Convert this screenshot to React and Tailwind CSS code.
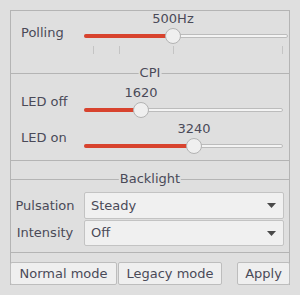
import React from 'react';

const Slider = ({ width, pos, value, valueH, rowH, ticks }) => {
    return (
        <div className="flex flex-col" style={{ width }}>
            <div className="relative" style={{ height: valueH }}>
                <span
                    className="absolute top-0 -translate-x-1/2 whitespace-nowrap"
                    style={{ left: pos, lineHeight: `${valueH}px` }}
                >
                    {value}
                </span>
            </div>
            <div className="relative flex items-center" style={{ height: rowH }}>
                <div className="w-full h-[4px] rounded-full border border-[#bcbcbc] bg-[#f4f4f4]" />
                <div
                    className="absolute left-0 h-[4px] rounded-l-full bg-[#d8432e]"
                    style={{ width: pos }}
                />
                <div
                    className="absolute w-[16px] h-[16px] -translate-x-1/2 rounded-full border border-[#b3b3b3] bg-[#efefef]"
                    style={{ left: pos }}
                />
            </div>
            {ticks && (
                <div className="relative h-[8px]">
                    {ticks.map((t) => (
                        <div key={t} className="absolute top-0 w-px h-[8px] bg-[#c4c4c4]" style={{ left: t }} />
                    ))}
                </div>
            )}
        </div>
    );
};

const Separator = ({ label }) => (
    <div className="relative h-px bg-[#b4b4b4]">
        {label && (
            <span className="absolute left-1/2 -top-[8px] -translate-x-1/2 bg-[#dfdfdf] px-[1px] leading-[16px]">
                {label}
            </span>
        )}
    </div>
);

const Combo = ({ text, h }) => (
    <div
        className="w-[200px] flex items-center justify-between rounded-[2px] border border-[#c3c3c3] bg-[#f0f0f0] pl-[6px] pr-[7px]"
        style={{ height: h }}
    >
        <span className="leading-[16px]">{text}</span>
        <svg width="9" height="5" viewBox="0 0 9 5">
            <polygon points="0,0 9,0 4.5,5" fill="#4a4a4a" />
        </svg>
    </div>
);

const Button = ({ children, w }) => (
    <button
        className="h-[23px] rounded-[2px] border border-[#bdbdbd] bg-[#efefef] leading-[16px] text-[#4a4a58]"
        style={{ width: w }}
    >
        {children}
    </button>
);

export default function App() {
    return (
        <div className="w-[300px] h-[295px] bg-[#dfdfdf] pt-[10px] pl-[10px] text-[13px] text-[#4a4a58] font-['DejaVu_Sans',sans-serif]">
            <div className="w-[280px] h-[275px] border-x border-t border-[#b4b4b4] flex flex-col">
                {/* polling */}
                <div className="flex h-[62px]">
                    <div className="w-[73px] pl-[10px] pt-[14px] leading-[16px]">Polling</div>
                    <Slider width={204} pos={89} value="500Hz" valueH={15} rowH={20} ticks={[9, 35, 89, 198]} />
                </div>
                <Separator label="CPI" />

                {/* cpi */}
                <div className="flex flex-col gap-[1px] h-[86px] pt-[10px]">
                    <div className="flex h-[35px]">
                        <div className="w-[73px] pl-[10px] flex items-center leading-[16px]">LED off</div>
                        <Slider width={199} pos={57} value="1620" valueH={17} rowH={18} />
                    </div>
                    <div className="flex h-[35px]">
                        <div className="w-[73px] pl-[10px] flex items-center leading-[16px]">LED on</div>
                        <Slider width={199} pos={110} value="3240" valueH={17} rowH={18} />
                    </div>
                </div>
                <Separator />
                <div className="h-[18px]" />
                <Separator label="Backlight" />

                {/* backlight */}
                <div className="flex flex-col gap-[1px] h-[72px] pt-[12px]">
                    <div className="flex items-center">
                        <div className="w-[73px] pr-[5px] text-center leading-[16px]">Pulsation</div>
                        <Combo text="Steady" h={27} />
                    </div>
                    <div className="flex items-center">
                        <div className="w-[73px] pr-[5px] text-center leading-[16px]">Intensity</div>
                        <Combo text="Off" h={26} />
                    </div>
                </div>
                <Separator />

                {/* buttons */}
                <div className="flex -mx-px pt-[9px]">
                    <Button w={107}>Normal mode</Button>
                    <div className="w-[1px]" />
                    <Button w={104}>Legacy mode</Button>
                    <div className="flex-1" />
                    <Button w={53}>Apply</Button>
                </div>
            </div>
        </div>
    );
}
